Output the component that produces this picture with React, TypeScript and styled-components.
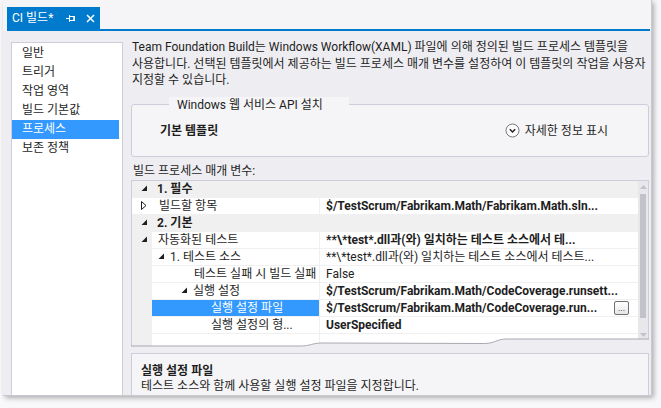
import React from "react";
import styled, { createGlobalStyle } from "styled-components";

const Global = createGlobalStyle`
  html, body { margin: 0; padding: 0; background: #f8f8fa; }
  body {
    font-family: Roboto, "Noto Sans CJK KR", sans-serif;
    font-size: 12px;
    color: #1e1e1e;
    word-break: keep-all;
  }
  #root { width: 661px; height: 408px; overflow: hidden; }
`;

const Window = styled.div`
  margin-left: 3px;
  width: 649px;
  height: 396px;
  box-sizing: border-box;
  background: #eeeef2;
  border-right: 1px solid #c9c9d1;
  border-bottom: 1px solid #c9c9d1;
  box-shadow: 2px 2px 5px rgba(0, 0, 0, 0.3);
  display: flex;
  flex-direction: column;
  overflow: hidden;
`;

const TabStrip = styled.div`
  background: #f5f5f7;
  padding: 7px 1px 0 4px;
  display: flex;
  flex-direction: column;
`;

const Tab = styled.div`
  width: 93px;
  height: 22px;
  box-sizing: border-box;
  background: #007acc;
  color: #fff;
  display: flex;
  align-items: center;
  padding: 0 5px 0 5px;
`;

const TabTitle = styled.span`
  flex: 1;
  line-height: 16px;
`;

const TabIcon = styled.svg<{ $gap: number }>`
  display: block;
  margin-right: ${(p) => p.$gap}px;
`;

const TabLine = styled.div`
  height: 2px;
  background: #007acc;
`;

const Body = styled.div`
  flex: 1;
  min-height: 0;
  display: flex;
  padding: 8px 2px 0 8px;
`;

const Nav = styled.ul`
  list-style: none;
  margin: 3px 8px 0 0;
  padding: 1px 0 0 0;
  width: 112px;
  box-sizing: border-box;
  background: #fff;
  border: 1px solid #cccedb;
  border-bottom: none;
`;

const NavItem = styled.li<{ $active?: boolean }>`
  height: 19px;
  line-height: 19px;
  padding-left: 10px;
  margin-right: 3px;
  background: ${(p) => (p.$active ? "#3399ff" : "transparent")};
  color: ${(p) => (p.$active ? "#fff" : "#1e1e1e")};
  white-space: nowrap;
`;

const Content = styled.div`
  flex: 1;
  min-width: 0;
  display: flex;
  flex-direction: column;
`;

const Intro = styled.p`
  margin: 0;
  line-height: 16.5px;
  padding: 0 0 0 1px;
`;

const Group = styled.fieldset`
  margin: 8px 0 0 0;
  padding: 10px 40px 17px 28px;
  border: 1px solid #cccedb;
  border-radius: 3px;
  background: #f5f5f7;
  min-width: 0;
`;

const Legend = styled.legend`
  margin-left: 9px;
  width: 180px;
  box-sizing: border-box;
  padding: 0 8px;
  line-height: 16px;
  background: #f5f5f7;
`;

const GroupRow = styled.div`
  display: flex;
  align-items: center;
  justify-content: space-between;
  line-height: 16px;
`;

const TemplateName = styled.span`
  font-weight: 700;
`;

const DetailsLink = styled.span`
  display: flex;
  align-items: center;
  gap: 5px;
`;

const SectionLabel = styled.div`
  margin-top: 6px;
  line-height: 16px;
  padding-left: 2px;
`;

const Grid = styled.div`
  position: relative;
  margin-top: 1px;
  height: 167px;
  box-sizing: border-box;
  border: 1px solid #cccedb;
  border-bottom: none;
  background: #fff;
  display: flex;
  flex-shrink: 0;
`;

const Rows = styled.div`
  flex: 1;
  min-width: 0;
  overflow: hidden;
`;

const Row = styled.div<{ $group?: boolean }>`
  display: flex;
  height: 17px;
  box-sizing: border-box;
  border-bottom: 1px solid #f0f0f0;
  background: ${(p) => (p.$group ? "#f0f0f0" : "#fff")};
  line-height: 16px;
`;

const Gutter = styled.div<{ $gray?: boolean }>`
  width: 20px;
  flex-shrink: 0;
  display: flex;
  align-items: center;
  padding-left: 9px;
  box-sizing: border-box;
  background: ${(p) => (p.$gray ? "#f0f0f0" : "transparent")};
`;

const GroupLabel = styled.div`
  font-weight: 700;
  padding-left: 5px;
`;

const NameCell = styled.div<{ $indent: number; $selected?: boolean }>`
  width: 168px;
  flex-shrink: 0;
  box-sizing: border-box;
  display: flex;
  align-items: center;
  padding-left: ${(p) => p.$indent}px;
  border-right: 1px solid #f0f0f0;
  background: ${(p) => (p.$selected ? "#3399ff" : "transparent")};
  color: ${(p) => (p.$selected ? "#fff" : "#1e1e1e")};
  white-space: nowrap;
  overflow: hidden;
`;

const ValueCell = styled.div`
  flex: 1;
  min-width: 0;
  display: flex;
  align-items: center;
  padding: 0 9px 0 6px;
`;

const ValueText = styled.span<{ $bold?: boolean }>`
  flex: 1;
  min-width: 0;
  font-weight: ${(p) => (p.$bold ? 700 : 400)};
  white-space: nowrap;
  overflow: hidden;
`;

const EllipsisButton = styled.button`
  width: 15px;
  height: 14px;
  margin: 0;
  border: 1px solid #707070;
  border-radius: 2px;
  background: linear-gradient(#ffffff, #e6e6e6);
  font: 9px/8px Roboto, sans-serif;
  color: #1e1e1e;
  display: flex;
  align-items: flex-end;
  justify-content: center;
  padding: 0 0 2px 0;
  box-sizing: border-box;
  flex-shrink: 0;
`;

const Scrollbar = styled.div`
  width: 10px;
  flex-shrink: 0;
  background: #e8e8ec;
  display: flex;
  flex-direction: column;
  align-items: center;
  padding-bottom: 5px;
  box-sizing: border-box;
`;

const ScrollArrow = styled.div`
  height: 13px;
  display: flex;
  align-items: center;
  justify-content: center;
`;

const Thumb = styled.div`
  width: 6px;
  height: 124px;
  background: #c2c3c9;
`;

const Spacer = styled.div`
  flex: 1;
`;

const Torn = styled.svg`
  position: absolute;
  left: -1px;
  bottom: 0;
  width: calc(100% + 2px);
  height: 10px;
  display: block;
`;

const Description = styled.div`
  margin-top: 6px;
  flex: 1;
  border: 1px solid #cccedb;
  border-bottom: none;
  background: #f5f5f7;
  padding: 10px 9px 0 9px;
  line-height: 15px;
`;

const DescTitle = styled.div`
  font-weight: 700;
`;

const ArrowSvg = styled.svg`
  display: block;
  flex-shrink: 0;
`;

const OpenArrow = () => (
  <ArrowSvg width="7" height="7" viewBox="0 0 7 7">
    <polygon points="6,0.5 6,6 0.5,6" fill="#1e1e1e" />
  </ArrowSvg>
);

const ClosedArrow = () => (
  <ArrowSvg width="6" height="9" viewBox="0 0 6 9">
    <polygon points="0.5,0.5 5,4.5 0.5,8.5" fill="none" stroke="#1e1e1e" strokeWidth="1" />
  </ArrowSvg>
);

const InlineArrow = styled.span`
  display: inline-flex;
  margin-right: 5px;
`;

type Item = {
  kind: "item";
  name: string;
  value: string;
  indent: number;
  arrow?: "open";
  gutter?: "open" | "closed";
  gutterGray?: boolean;
  bold?: boolean;
  selected?: boolean;
  button?: boolean;
};
type GroupHead = { kind: "group"; label: string };
type GridRow = Item | GroupHead;

const rows: GridRow[] = [
  { kind: "group", label: "1. 필수" },
  {
    kind: "item",
    name: "빌드할 항목",
    value: "$/TestScrum/Fabrikam.Math/Fabrikam.Math.sln...",
    indent: 7,
    gutter: "closed",
    bold: true,
  },
  { kind: "group", label: "2. 기본" },
  {
    kind: "item",
    name: "자동화된 테스트",
    value: "**\\*test*.dll과(와) 일치하는 테스트 소스에서 테...",
    indent: 6,
    gutter: "open",
    gutterGray: true,
    bold: true,
  },
  {
    kind: "item",
    name: "1. 테스트 소스",
    value: "**\\*test*.dll과(와) 일치하는 테스트 소스에서 테스트...",
    indent: 6,
    arrow: "open",
    gutterGray: true,
  },
  {
    kind: "item",
    name: "테스트 실패 시 빌드 실패",
    value: "False",
    indent: 42,
    gutterGray: true,
  },
  {
    kind: "item",
    name: "실행 설정",
    value: "$/TestScrum/Fabrikam.Math/CodeCoverage.runsett...",
    indent: 29,
    arrow: "open",
    gutterGray: true,
    bold: true,
  },
  {
    kind: "item",
    name: "실행 설정 파일",
    value: "$/TestScrum/Fabrikam.Math/CodeCoverage.run...",
    indent: 59,
    gutterGray: true,
    bold: true,
    selected: true,
    button: true,
  },
  {
    kind: "item",
    name: "실행 설정의 형...",
    value: "UserSpecified",
    indent: 59,
    gutterGray: true,
    bold: true,
  },
  { kind: "item", name: "", value: "", indent: 0, gutterGray: true },
];

const navItems = ["일반", "트리거", "작업 영역", "빌드 기본값", "프로세스", "보존 정책"];

export default function App() {
  return (
    <>
      <Global />
      <Window>
        <TabStrip>
          <Tab>
            <TabTitle>CI 빌드*</TabTitle>
            <TabIcon $gap={10} width="10" height="9" viewBox="0 0 10 9">
              <path d="M0 4.5H3.5M3.5 1V8M3.5 2.5H8V6.5H3.5" stroke="#fff" fill="none" strokeWidth="1" />
              <rect x="7.5" y="2" width="1.5" height="5" fill="#fff" />
            </TabIcon>
            <TabIcon $gap={0} width="9" height="9" viewBox="0 0 9 9">
              <path d="M1 1L8 8M8 1L1 8" stroke="#fff" strokeWidth="1.5" fill="none" />
            </TabIcon>
          </Tab>
          <TabLine />
        </TabStrip>
        <Body>
          <Nav>
            {navItems.map((n) => (
              <NavItem key={n} $active={n === "프로세스"}>
                {n}
              </NavItem>
            ))}
          </Nav>
          <Content>
            <Intro>
              Team Foundation Build는 Windows Workflow(XAML) 파일에 의해 정의된 빌드 프로세스 템플릿을
              사용합니다. 선택된 템플릿에서 제공하는 빌드 프로세스 매개 변수를 설정하여 이 템플릿의 작업을 사용자
              지정할 수 있습니다.
            </Intro>
            <Group>
              <Legend>Windows 웹 서비스 API 설치</Legend>
              <GroupRow>
                <TemplateName>기본 템플릿</TemplateName>
                <DetailsLink>
                  <ArrowSvg width="15" height="15" viewBox="0 0 15 15">
                    <circle cx="7.5" cy="7.5" r="6.5" fill="#fbfbfb" stroke="#7a7a7a" />
                    <path d="M4.8 6.2L7.5 8.9L10.2 6.2" fill="none" stroke="#1e1e1e" strokeWidth="1.4" />
                  </ArrowSvg>
                  자세한 정보 표시
                </DetailsLink>
              </GroupRow>
            </Group>
            <SectionLabel>빌드 프로세스 매개 변수:</SectionLabel>
            <Grid>
              <Rows>
                {rows.map((r, i) =>
                  r.kind === "group" ? (
                    <Row key={i} $group>
                      <Gutter>
                        <OpenArrow />
                      </Gutter>
                      <GroupLabel>{r.label}</GroupLabel>
                    </Row>
                  ) : (
                    <Row key={i}>
                      <Gutter $gray={r.gutterGray}>
                        {r.gutter === "open" && <OpenArrow />}
                        {r.gutter === "closed" && <ClosedArrow />}
                      </Gutter>
                      <NameCell $indent={r.indent} $selected={r.selected}>
                        {r.arrow === "open" && (
                          <InlineArrow>
                            <OpenArrow />
                          </InlineArrow>
                        )}
                        {r.name}
                      </NameCell>
                      <ValueCell>
                        <ValueText $bold={r.bold}>{r.value}</ValueText>
                        {r.button && <EllipsisButton>...</EllipsisButton>}
                      </ValueCell>
                    </Row>
                  )
                )}
              </Rows>
              <Scrollbar>
                <ScrollArrow>
                  <svg width="7" height="4" viewBox="0 0 7 4">
                    <polygon points="0,4 3.5,0 7,4" fill="#c2c3c9" />
                  </svg>
                </ScrollArrow>
                <Thumb />
                <Spacer />
                <ScrollArrow>
                  <svg width="7" height="4" viewBox="0 0 7 4">
                    <polygon points="0,0 3.5,4 7,0" fill="#c2c3c9" />
                  </svg>
                </ScrollArrow>
              </Scrollbar>
              <Torn viewBox="0 0 520 10" preserveAspectRatio="none">
                <path
                  d="M0 9 L170 9 C180 9 182 6 192 6 L355 6.5 C365 6.5 367 2 377 2 L520 2 L520 10 L0 10 Z"
                  fill="#eeeef2"
                />
                <path
                  d="M0 9 L170 9 C180 9 182 6 192 6 L355 6.5 C365 6.5 367 2 377 2 L520 2"
                  fill="none"
                  stroke="#a9a9b1"
                  strokeWidth="1"
                />
              </Torn>
            </Grid>
            <Description>
              <DescTitle>실행 설정 파일</DescTitle>
              <div>테스트 소스와 함께 사용할 실행 설정 파일을 지정합니다.</div>
            </Description>
          </Content>
        </Body>
      </Window>
    </>
  );
}
